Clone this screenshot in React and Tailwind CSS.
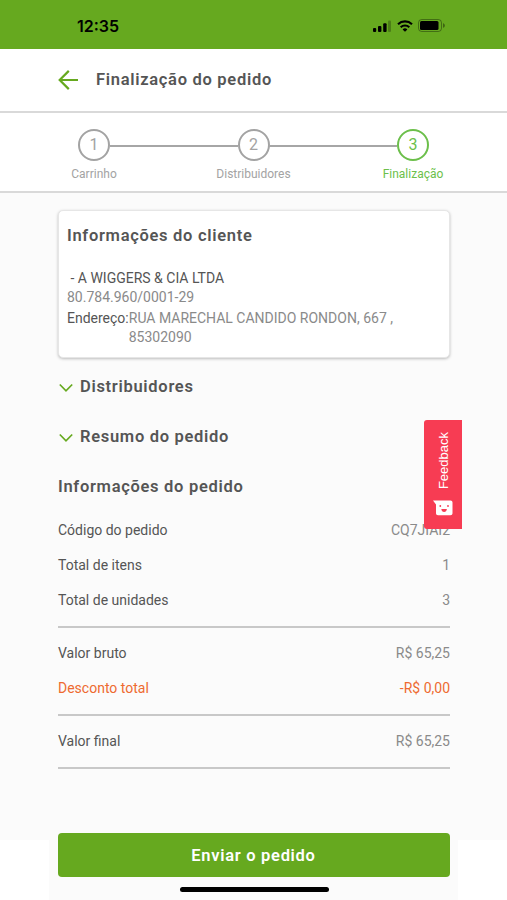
import React from 'react';
import clsx from 'clsx';

const steps = ['Carrinho', 'Distribuidores', 'Finalização'];

function StatusBar() {
  return (
    <div className="flex h-[49px] items-center bg-[#66a91f] pl-[77px] pr-[62px] pt-[2px] text-black">
      <span className="font-[Inter,sans-serif] text-[16px] font-semibold leading-5">12:35</span>
      <svg className="ml-auto" width="18" height="12" viewBox="0 0 18 12">
        <rect x="0" y="8" width="3.2" height="4" rx="1"/>
        <rect x="5" y="6" width="3.4" height="6" rx="1"/>
        <rect x="10.2" y="3.2" width="3.4" height="8.8" rx="1"/>
        <rect x="15" y="0.5" width="3" height="11.5" rx="1" fillOpacity="0.25"/>
      </svg>
      <svg className="ml-[6px]" width="16" height="12" viewBox="0 0 16 12" fill="none" stroke="currentColor" strokeWidth="2.1">
        <path d="M1 4.2a10.2 10.2 0 0 1 14 0"/>
        <path d="M3.7 7.2a6.3 6.3 0 0 1 8.6 0"/>
        <path d="M8 11.8 5.6 9.4a3.5 3.5 0 0 1 4.8 0z" fill="currentColor" stroke="none"/>
      </svg>
      <svg className="ml-[5px]" width="27" height="13" viewBox="0 0 27 13">
        <rect x="0.5" y="0.5" width="23" height="12" rx="3.2" fill="none" stroke="#000" strokeOpacity="0.35"/>
        <rect x="2" y="2" width="18.5" height="9" rx="1.5"/>
        <path d="M25 4.2v4.6c1.2-.4 1.9-1.2 1.9-2.3S26.2 4.6 25 4.2z" fillOpacity="0.4"/>
      </svg>
    </div>
  );
}

function Header() {
  return (
    <header className="flex h-[64px] items-center border-b-2 border-[#d9d9d9] bg-white pl-[58px]">
      <svg width="20" height="20" viewBox="0 0 20 20" fill="none" stroke="#66a91f" strokeWidth="2.2">
        <path d="M10.8 0.9 1.7 10l9.1 9.1M1.7 10H20"/>
      </svg>
      <h1 className="ml-[18px] text-[16.5px] font-semibold leading-5 tracking-[0.7px]">Finalização do pedido</h1>
    </header>
  );
}

function Stepper() {
  return (
    <div className="flex h-[80px] justify-between border-b-2 border-[#d9d9d9] bg-white pl-[44px] pr-[44px] pt-[16px]">
      {steps.map((label, i) => {
        const active = i === 2;
        return (
          <div key={label} className={clsx('relative flex w-[100px] flex-col items-center', active ? 'text-[#6cbf4b]' : 'text-[#a3a3a3]')}>
            {i > 0 && <span className="absolute right-[66px] top-[16px] h-[2px] w-[128px] bg-[#a6a6a6]"/>}
            <span className="grid h-8 w-8 place-items-center rounded-full border-2 border-current text-[16px] leading-none">{i + 1}</span>
            <span className="mt-[6px] text-[12px] leading-[14px]">{label}</span>
          </div>
        );
      })}
    </div>
  );
}

function ClientCard() {
  return (
    <section className="h-[148px] rounded-[5px] border border-[#e6e6e6] bg-white px-[8px] pt-[15px] shadow-[0_1px_3px_rgba(0,0,0,0.25)]">
      <h2 className="text-[16.5px] font-semibold leading-5 tracking-[0.7px]">Informações do cliente</h2>
      <div className="mt-[23px] whitespace-pre text-[14px] leading-[19px]"> - A WIGGERS &amp; CIA LTDA</div>
      <div className="text-[14px] leading-[19px] text-[#8a8a8a]">80.784.960/0001-29</div>
      <div className="mt-[2px] flex text-[14px] leading-[19px]">
        <span>Endereço:</span>
        <span className="text-[#8a8a8a]">RUA MARECHAL CANDIDO RONDON, 667 ,<br/>85302090</span>
      </div>
    </section>
  );
}

function Collapse({ title }) {
  return (
    <button className="flex h-[50px] w-full items-center text-left">
      <svg className="ml-[1px] mt-[2px]" width="14" height="10" viewBox="0 0 14 10" fill="none" stroke="#66a91f" strokeWidth="1.7">
        <path d="M0.8 1.5 7 7.8l6.2-6.3"/>
      </svg>
      <span className="ml-[7px] text-[16.5px] font-semibold leading-5 tracking-[0.7px]">{title}</span>
    </button>
  );
}

function Row({ label, value, discount }) {
  return (
    <div className={clsx('flex h-[35px] items-center justify-between text-[14px] leading-5', discount && 'text-[#ee6a30]')}>
      <span>{label}</span>
      <span className={discount ? '' : 'text-[#8a8a8a]'}>{value}</span>
    </div>
  );
}

function Divider() {
  return <div className="mb-[7px] mt-[9px] h-[2px] bg-[#c8c8c8]"/>;
}

function FeedbackTab() {
  return (
    <button className="absolute left-[424px] top-[420px] flex h-[109px] w-[38px] flex-col items-center rounded-l-[3px] bg-[#f73c53] pt-[12px] text-white">
      <span className="rotate-180 pr-[1px] font-['Liberation_Sans',sans-serif] text-[13px] leading-[18px] [writing-mode:vertical-rl]">Feedback</span>
      <svg className="mt-[11px]" width="20" height="16" viewBox="0 0 20 16">
        <path d="M0 .6h17.500c1.200 0 2 .8 2 2v10.600c0 1.200-.8 2-2 2H5c-1.200 0-2-.8-2-2V4.600z" fill="#fff"/>
        <circle cx="7.300" cy="6" r="0.900" fill="#f73c53"/>
        <circle cx="15" cy="6" r="0.900" fill="#f73c53"/>
        <path d="M8.300 9h5.600c-.2 2-1.300 3-2.800 3s-2.600-1-2.800-3z" fill="#f73c53"/>
      </svg>
    </button>
  );
}

export default function App() {
  return (
    <div className="relative h-[900px] w-[507px] overflow-hidden bg-white font-[Roboto,sans-serif] text-[#555555]">
      <StatusBar/>
      <Header/>
      <Stepper/>
      <main className="h-[647px] bg-[#fbfbfb] pl-[58px] pr-[57px] pt-[17px]">
        <ClientCard/>
        <div className="pt-[4px]">
          <Collapse title="Distribuidores"/>
          <Collapse title="Resumo do pedido"/>
          <h2 className="flex h-[50px] items-center text-[16.5px] font-semibold leading-5 tracking-[0.7px]">Informações do pedido</h2>
        </div>
        <Row label="Código do pedido" value="CQ7JIAI2"/>
        <Row label="Total de itens" value="1"/>
        <Row label="Total de unidades" value="3"/>
        <Divider/>
        <Row label="Valor bruto" value="R$ 65,25"/>
        <Row label="Desconto total" value="-R$ 0,00" discount/>
        <Divider/>
        <Row label="Valor final" value="R$ 65,25"/>
        <Divider/>
      </main>
      <footer className="mx-auto -mt-[7px] flex h-[67px] w-[409px] flex-col items-center bg-[#fbfbfb]">
        <button className="h-[44px] w-[392px] shrink-0 rounded-[4px] bg-[#66a91f] pt-[1px] text-[16.5px] font-semibold leading-5 tracking-[0.7px] text-white">Enviar o pedido</button>
        <div className="ml-[1px] mt-[10px] h-[5px] w-[149px] shrink-0 rounded-full bg-black"/>
      </footer>
      <FeedbackTab/>
    </div>
  );
}
